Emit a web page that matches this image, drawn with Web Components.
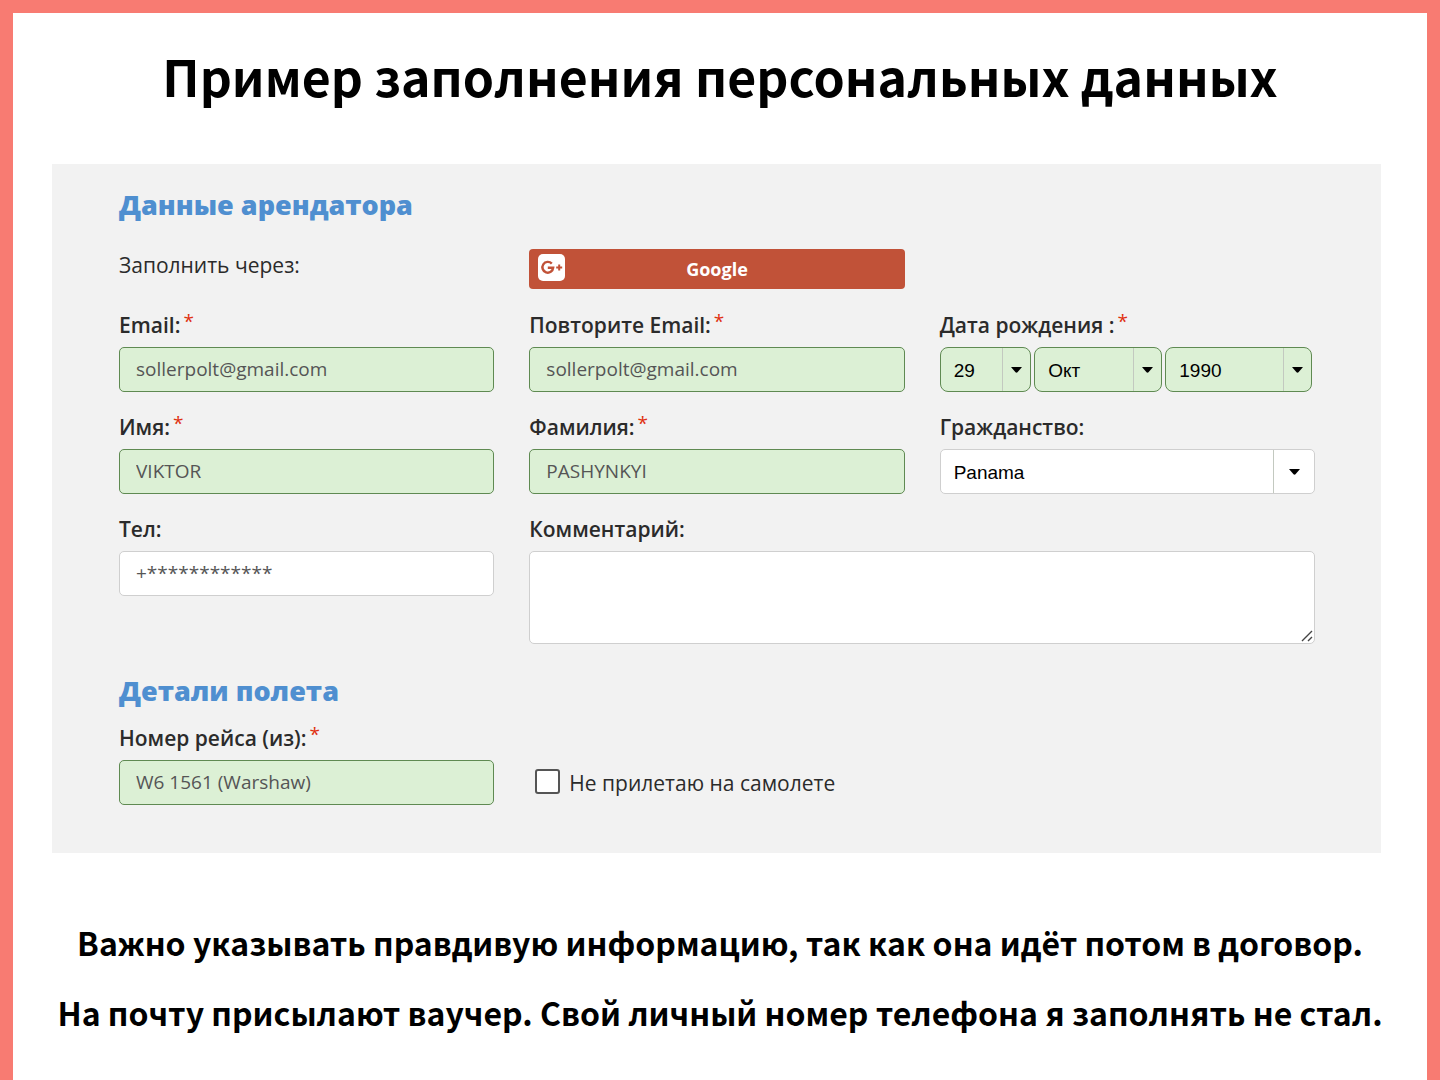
<!DOCTYPE html>
<html lang="ru">
<head>
<meta charset="utf-8">
<meta name="viewport" content="width=device-width, initial-scale=1">
<title>Пример заполнения персональных данных</title>
<style>
  body { margin: 0; background: #fff; font-family: "Open Sans", "Noto Sans", sans-serif; }
</style>
</head>
<body>
<guide-page>
  <span slot="title">Пример заполнения персональных данных</span>
  <form-panel>
    <form-section heading="Данные арендатора">
      <social-fill caption="Заполнить через:" provider="Google"></social-fill>
      <form-row>
        <text-field label="Email:" required type="email" value="sollerpolt@gmail.com"></text-field>
        <text-field label="Повторите Email:" required type="email" value="sollerpolt@gmail.com"></text-field>
        <select-field label="Дата рождения :" required values="29:День:91,Окт:Месяц:128,1990:Год:147"></select-field>
      </form-row>
      <form-row>
        <text-field label="Имя:" required value="VIKTOR"></text-field>
        <text-field label="Фамилия:" required value="PASHYNKYI"></text-field>
        <select-field wide label="Гражданство:" values="Panama:Гражданство:1"></select-field>
      </form-row>
      <form-row>
        <text-field label="Тел:" type="tel" value="+************"></text-field>
        <text-field multiline label="Комментарий:"></text-field>
      </form-row>
    </form-section>
    <form-section compact heading="Детали полета">
      <form-row>
        <text-field label="Номер рейса (из):" required value="W6 1561 (Warshaw)"></text-field>
        <check-field label="Не прилетаю на самолете"></check-field>
      </form-row>
    </form-section>
  </form-panel>
  <span slot="note">Важно указывать правдивую информацию, так как она идёт потом в договор.</span>
  <span slot="note">На почту присылают ваучер. Свой личный номер телефона я заполнять не стал.</span>
</guide-page>

<script>
const fieldStyles = `
  :host { display: flex; flex-direction: column; gap: 7px; min-width: 0; color: #2b2b2b; }
  * { box-sizing: border-box; }
  label { font-size: 21px; line-height: 30px; font-weight: 600; white-space: nowrap; display: flex; gap: 3px; }
  .star { color: #e03010; font-size: 19px; line-height: 22px; font-weight: 400; }
`;

function render(element, html) {
  element.attachShadow({ mode: 'open' }).innerHTML = html;
}

function labelHtml(element) {
  const star = element.hasAttribute('required') ? '<span class="star">*</span>' : '';
  return `<label for="control"><span>${element.getAttribute('label')}</span>${star}</label>`;
}

class GuidePage extends HTMLElement {
  connectedCallback() {
    render(this, `<style>
      :host { display: block; box-sizing: border-box; min-height: 100vh; background: #fff;
              border: 13px solid #f87b72; border-bottom: 0; padding: 26px 39px 0; color: #000; }
      h1, footer { font-family: "Noto Sans CJK SC", "Open Sans", sans-serif; font-weight: 700; text-align: center; }
      h1 { margin: 0 0 53px; font-size: 50px; line-height: 72px; }
      main { display: block; padding-right: 7px; }
      footer { margin: 54px -20px 0; font-size: 32px; line-height: 70px; }
      ::slotted([slot="note"]) { display: block; }
    </style>
    <h1><slot name="title"></slot></h1>
    <main><slot></slot></main>
    <footer><slot name="note"></slot></footer>`);
  }
}

class FormPanel extends HTMLElement {
  connectedCallback() {
    render(this, `<style>
      :host { display: block; background: #f2f2f2; padding: 25px 66px 48px 67px; }
      form { display: flex; flex-direction: column; gap: 31px; }
    </style>
    <form><slot></slot></form>`);
  }
}

class FormSection extends HTMLElement {
  connectedCallback() {
    render(this, `<style>
      :host { display: block; }
      h2 { margin: 0 0 28px; font-size: 27px; line-height: 32px; font-weight: 800; color: #4f8fd0; }
      :host([compact]) h2 { margin-bottom: 16px; }
      div { display: flex; flex-direction: column; gap: 20px; }
    </style>
    <h2>${this.getAttribute('heading')}</h2>
    <div><slot></slot></div>`);
  }
}

class FormRow extends HTMLElement {
  connectedCallback() {
    render(this, `<style>
      :host { display: grid; grid-template-columns: repeat(3, minmax(0, 1fr)); column-gap: 35px; }
      ::slotted([multiline]) { grid-column: span 2; }
    </style>
    <slot></slot>`);
  }
}

class SocialFill extends HTMLElement {
  connectedCallback() {
    render(this, `<style>
      :host { display: grid; grid-template-columns: repeat(3, minmax(0, 1fr)); column-gap: 35px; padding-bottom: 1px; color: #2b2b2b; }
      .caption { font-size: 21px; line-height: 32px; }
      button { display: grid; grid-template-columns: 28px 1fr 28px; align-items: center; height: 40px; padding: 0 8px;
               border: 0; border-radius: 4px; background: #c15238; color: #fff; font: 700 18px/24px "Open Sans", sans-serif; }
      svg { display: block; align-self: start; margin-top: 5px; }
    </style>
    <span class="caption">${this.getAttribute('caption')}</span>
    <button type="button">
      <svg width="28" height="28" viewBox="0 0 28 28" aria-hidden="true">
        <rect x="1" y="0" width="27" height="27" rx="5" fill="#fff"/>
        <path d="M14.8 9.6 A5.4 5.4 0 1 0 16.2 13.7 H10.8" fill="none" stroke="#c15238" stroke-width="2.4"/>
        <path d="M22.2 10.6 V16.4 M19.2 13.5 H25.2" fill="none" stroke="#c15238" stroke-width="2"/>
      </svg>
      <span>${this.getAttribute('provider')}</span>
    </button>`);
  }
}

class TextField extends HTMLElement {
  connectedCallback() {
    const value = this.getAttribute('value') || '';
    const type = this.getAttribute('type') || 'text';
    const control = this.hasAttribute('multiline')
      ? `<div class="area"><textarea id="control"></textarea>
         <svg width="12" height="12" viewBox="0 0 12 12" aria-hidden="true"><path d="M1 11L11 1M7 11L11 7" stroke="#444" stroke-width="1.4" fill="none"/></svg></div>`
      : `<input id="control" type="${type}" value="${value}">`;
    render(this, `<style>${fieldStyles}
      input, textarea { display: block; width: 100%; height: 45px; margin: 0; padding: 0 16px 2px; border: 1px solid #cfcfcf;
              border-radius: 5px; background: #fff; color: #555; font: 400 19px/26px "Open Sans", sans-serif; outline: 0; }
      .area { display: grid; }
      .area > * { grid-area: 1 / 1; }
      .area svg { align-self: end; justify-self: end; margin: 0 2px 2px 0; pointer-events: none; }
      textarea { height: 93px; padding: 8px 16px; resize: none; }
      :host([required]) input { background: #dcf0d5; border-color: #5f8a52; }
    </style>${labelHtml(this)}${control}`);
  }
}

class SelectField extends HTMLElement {
  connectedCallback() {
    const boxes = this.getAttribute('values').split(',').map((entry, index) => {
      const [value, name, share] = entry.split(':');
      return `<div class="box" style="flex: ${share} 1 0">
        <select ${index === 0 ? 'id="control"' : ''} aria-label="${name}"><option>${value}</option></select>
        <i><svg width="11" height="6" viewBox="0 0 11 6" aria-hidden="true"><path d="M0 0H11L6.5 5.3Q5.5 6 4.5 5.3Z" fill="#000"/></svg></i>
      </div>`;
    }).join('');
    render(this, `<style>${fieldStyles}
      .group { display: flex; gap: 3px; padding-right: 3px; }
      .box { display: grid; grid-template-columns: 1fr 28px; height: 45px; min-width: 0; border: 1px solid #5f8a52;
             border-radius: 8px; background: #dcf0d5; }
      select { grid-area: 1 / 1 / 2 / 3; appearance: none; width: 100%; margin: 0; padding: 2px 13px 0; border: 0;
               background: transparent; color: #000; font: 400 19px/24px "Liberation Sans", sans-serif; outline: 0; }
      i { grid-area: 1 / 2; display: flex; align-items: center; justify-content: center; border-left: 1px solid #c3c9c0; pointer-events: none; }
      :host([wide]) .group { padding-right: 0; }
      :host([wide]) .box { grid-template-columns: 1fr 41px; background: #fff; border-color: #cfcfcf; border-radius: 5px; }
    </style>${labelHtml(this)}<div class="group">${boxes}</div>`);
  }
}

class CheckField extends HTMLElement {
  connectedCallback() {
    render(this, `<style>
      :host { display: flex; align-items: end; color: #2b2b2b; }
      label { display: flex; align-items: center; gap: 9px; height: 45px; padding-left: 6px; font-size: 21px; line-height: 28px; white-space: nowrap; }
      input { appearance: none; box-sizing: border-box; flex: none; width: 25px; height: 25px; margin: 0 0 2px; border: 2px solid #555; border-radius: 3px; background: #fff; }
      input:checked { background: #4f8fd0; }
    </style>
    <label><input type="checkbox"><span>${this.getAttribute('label')}</span></label>`);
  }
}

customElements.define('guide-page', GuidePage);
customElements.define('form-panel', FormPanel);
customElements.define('form-section', FormSection);
customElements.define('form-row', FormRow);
customElements.define('social-fill', SocialFill);
customElements.define('text-field', TextField);
customElements.define('select-field', SelectField);
customElements.define('check-field', CheckField);
</script>
</body>
</html>
